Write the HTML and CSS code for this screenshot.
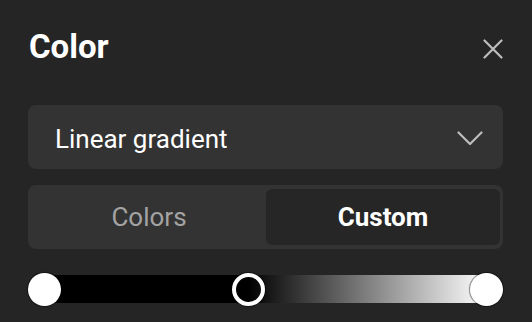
FILE: index.html
```html
<!DOCTYPE html>
<html>
<head>
<meta charset="utf-8">
<link rel="stylesheet" href="styles.css">
</head>
<body>
<div class="panel">
  <div class="header">
    <h1 class="title">Color</h1>
    <button class="close" aria-label="Close">
      <svg width="20" height="20" viewBox="0 0 20 20"><path d="M1.5 1.5 L18.5 18.5 M18.5 1.5 L1.5 18.5" stroke="#bdbdbd" stroke-width="2.2" stroke-linecap="round" fill="none"/></svg>
    </button>
  </div>
  <div class="select">
    <span class="select-label">Linear gradient</span>
    <svg class="chevron" width="26" height="15" viewBox="0 0 26 15"><path d="M1.5 1.5 L13 13 L24.5 1.5" stroke="#bdbdbd" stroke-width="2.2" stroke-linecap="round" stroke-linejoin="round" fill="none"/></svg>
  </div>
  <div class="tabs">
    <div class="tab">Colors</div>
    <div class="tab active">Custom</div>
  </div>
  <div class="slider">
    <div class="track"></div>
    <span class="thumb thumb-start"></span>
    <span class="thumb thumb-mid"></span>
    <span class="thumb thumb-end"></span>
  </div>
</div>
</body>
</html>
```
FILE: styles.css
```css
* { box-sizing: border-box; }
html, body {
  margin: 0;
  padding: 0;
  background: #252525;
  width: 532px;
  height: 322px;
  overflow: hidden;
  font-family: Roboto, "Liberation Sans", sans-serif;
}
.panel {
  padding: 29px 29px 0 28px;
  display: flex;
  flex-direction: column;
}
.header {
  display: flex;
  align-items: center;
  justify-content: space-between;
  height: 36px;
  margin-bottom: 40px;
}
.title {
  margin: 0 0 0 1px;
  font-size: 33px;
  line-height: 36px;
  font-weight: 700;
  color: #ffffff;
}
.close {
  background: none;
  border: 0;
  padding: 0;
  width: 20px;
  height: 20px;
  margin-top: 4px;
  display: flex;
}
.select {
  height: 64px;
  background: #333333;
  border-radius: 8px;
  display: flex;
  align-items: center;
  justify-content: space-between;
  padding: 0 20px 0 27px;
  margin-bottom: 16px;
}
.select-label {
  font-size: 26px;
  color: #ffffff;
  margin-top: 3px;
}
.chevron { display: block; margin-top: 2px; }
.tabs {
  height: 64px;
  background: #333333;
  border-radius: 8px;
  padding: 4px 3px 4px 4px;
  display: grid;
  grid-template-columns: 1fr 1fr;
  margin-bottom: 23px;
}
.tab {
  display: flex;
  align-items: center;
  justify-content: center;
  font-size: 26px;
  color: #a3a3a3;
  border-radius: 6px;
}
.tab.active {
  background: #262626;
  color: #ffffff;
  font-weight: 700;
}
.slider {
  position: relative;
  height: 34px;
  padding: 3px 16px;
}
.track {
  height: 28px;
  background: linear-gradient(to right, #000 0%, #000 46%, #fff 100%);
}
.thumb {
  position: absolute;
  top: 1px;
  width: 33px;
  height: 33px;
  border-radius: 50%;
  box-shadow: 0 0 1px 1px rgba(0,0,0,0.45);
}
.thumb-start { left: 0; background: #ffffff; }
.thumb-mid { left: 204px; border: 4px solid #ffffff; background: transparent; }
.thumb-end { left: 442px; background: #ffffff; }
```
